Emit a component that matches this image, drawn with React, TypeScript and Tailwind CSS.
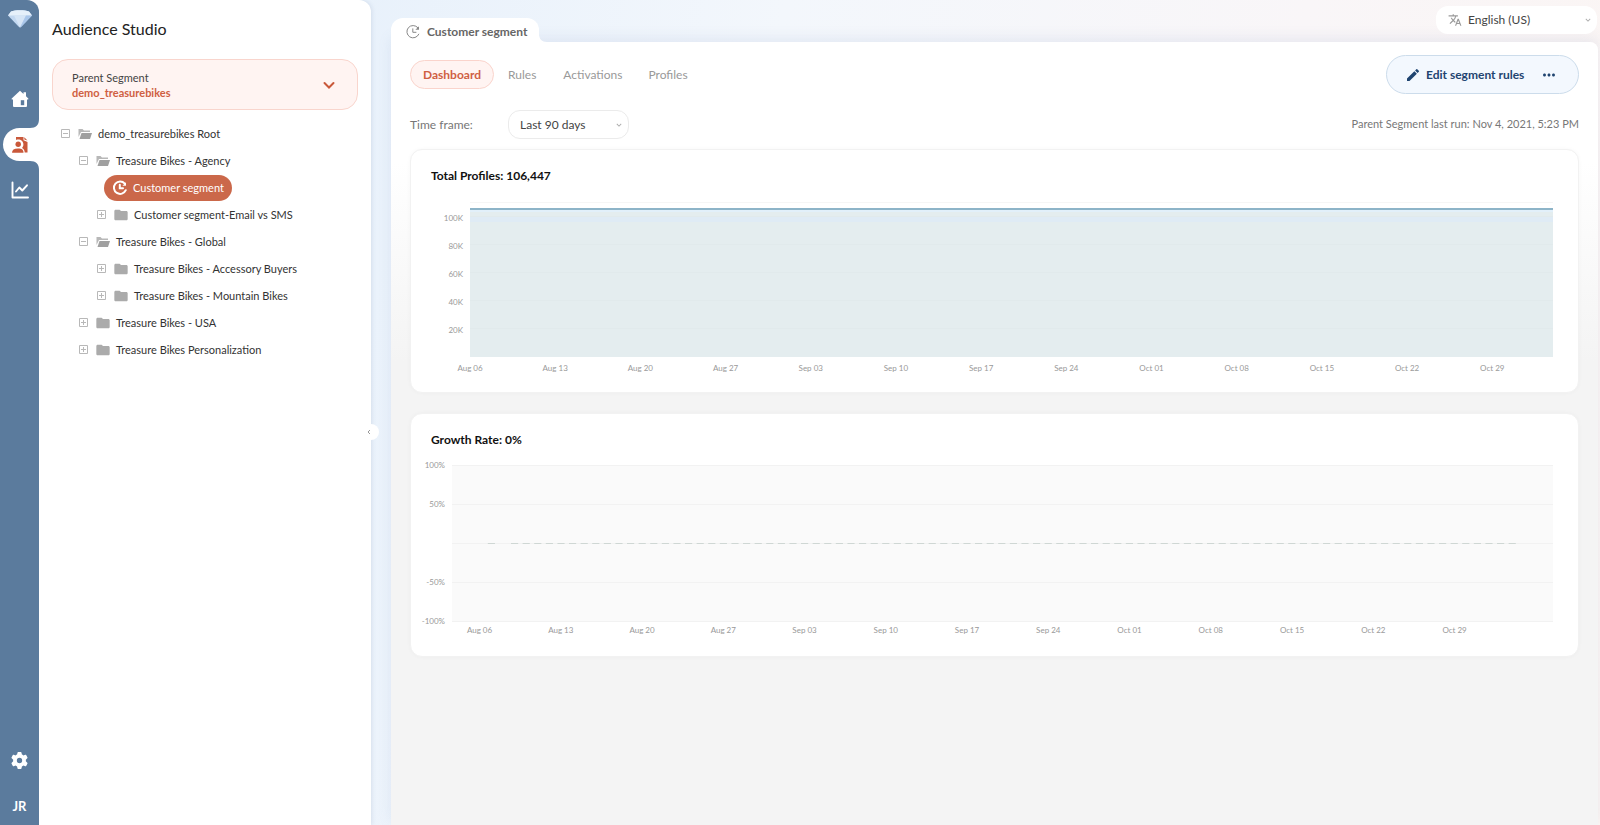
import type { ReactNode } from "react";
import { FaGear } from "react-icons/fa6";
import {
  MdEdit,
  MdFolder,
  MdKeyboardArrowDown,
  MdMoreHoriz,
  MdTranslate,
} from "react-icons/md";

type TreeRow = {
  label: string;
  level: number;
  open?: boolean;
  active?: boolean;
};

const tree: TreeRow[] = [
  { label: "demo_treasurebikes Root", level: 0, open: true },
  { label: "Treasure Bikes - Agency", level: 1, open: true },
  { label: "Customer segment", level: 2, active: true },
  { label: "Customer segment-Email vs SMS", level: 2 },
  { label: "Treasure Bikes - Global", level: 1, open: true },
  { label: "Treasure Bikes - Accessory Buyers", level: 2 },
  { label: "Treasure Bikes - Mountain Bikes", level: 2 },
  { label: "Treasure Bikes - USA", level: 1 },
  { label: "Treasure Bikes Personalization", level: 1 },
];

const indents = ["pl-[9px]", "pl-[27px]", "pl-[45px]"];

const weeks = [
  "Aug 06",
  "Aug 13",
  "Aug 20",
  "Aug 27",
  "Sep 03",
  "Sep 10",
  "Sep 17",
  "Sep 24",
  "Oct 01",
  "Oct 08",
  "Oct 15",
  "Oct 22",
  "Oct 29",
];

function Diamond() {
  return (
    <svg viewBox="0 0 24 18" className="w-6 h-[18px]" aria-hidden="true">
      <path
        d="M3 1.500C5 .6 8.500.3 12 .3s7 .3 9 1.200L24 5.500 13 17q-1 .8-2 0L0 5.500z"
        fill="#c3d8f1"
      />
      <path d="M3 1.500C5 .6 8.500.3 12 .3s7 .3 9 1.200L24 5.500H0z" fill="#e6f0fa" />
      <path d="M6 5.500h12l-6 12z" fill="#d6e5f6" />
      <path d="M18 5.500h6L13 17l-1 .4z" fill="#a9c6ea" />
    </svg>
  );
}

function HomeIcon() {
  return (
    <svg viewBox="0 0 18 18" className="w-[18px] h-[18px]" aria-hidden="true">
      <path
        d="M9 .8 12.500 4V2.200H15v4.100l2.300 2.200q.6 1-.5 1H16V16q0 1-1 1H3q-1 0-1-1V9.500h-.8q-1.100 0-.5-1z"
        fill="#fff"
      />
      <path d="M9.800 10.200h3.400v5H9.800z" fill="#5b7b9d" />
    </svg>
  );
}

function AudienceIcon() {
  return (
    <svg
      viewBox="0 0 18 18"
      className="w-[18px] h-[18px]"
      fill="#c9583a"
      aria-hidden="true"
    >
      <path d="M5 1h7.500v3.200L16.500 6v10.500h-2.800c-.1-2.300-.9-3.700-2.700-4.600.9-1 1.400-2 1.400-3.400C12.400 5.600 10 3.600 7.200 3.600c-.8 0-1.500.1-2.200.4z" />
      <path d="M13.300 1.200 16.500 4.600l-3.200-1z" />
      <circle cx="7.200" cy="8.300" r="2.700" />
      <path d="M1 16.800c0-3 2-4.400 6-4.400s5.500 1.400 5.500 4.400z" />
    </svg>
  );
}

function ChartIcon() {
  return (
    <svg
      viewBox="0 0 18 18"
      className="w-[18px] h-[18px]"
      fill="none"
      stroke="#fff"
      strokeWidth="1.900"
      strokeLinejoin="round"
      strokeLinecap="round"
      aria-hidden="true"
    >
      <path d="M1.500 1.500v15H17" />
      <path d="M5 10.500 8.300 6.500l3 3L16 4.300" />
    </svg>
  );
}

function SegmentIcon({ className }: { className?: string }) {
  return (
    <svg
      viewBox="0 0 16 16"
      className={className}
      fill="none"
      stroke="currentColor"
      strokeLinecap="round"
      aria-hidden="true"
    >
      <path d="M12.800 3.600A6.200 6.200 0 1 0 13.800 10.200" />
      <path d="M7.800 4.800V8.300H11" />
      <path d="M14 2.200v3.600h-3.600z" fill="currentColor" stroke="none" />
    </svg>
  );
}

function OpenFolder() {
  return (
    <svg viewBox="0 0 14 12" className="w-[14px] h-3" aria-hidden="true">
      <path d="M0.500 9V1h4l1.500 1.500h6V4H3z" fill="#b8b8b8" />
      <path d="M3.500 5H14l-2 6H1.500z" fill="#a0a0a0" />
    </svg>
  );
}

function Toggle({ open }: { open?: boolean }) {
  return (
    <svg
      viewBox="0 0 9 9"
      className="w-[9px] h-[9px]"
      fill="none"
      stroke="#b8b8b8"
      aria-hidden="true"
    >
      <path d="M.5.5h8v8h-8zM2 4.500h5" />
      {!open && <path d="M4.500 2v5" />}
    </svg>
  );
}

function Rail() {
  return (
    <nav className="w-[39px] shrink-0 flex flex-col items-center bg-[#5b7b9d] rounded-tr-xl pt-[10px]">
      <a href="#home" aria-label="Treasure Data">
        <Diamond />
      </a>
      <a href="#start" aria-label="Home" className="mt-[62px]">
        <HomeIcon />
      </a>
      <a
        href="#audience"
        aria-label="Audience Studio"
        className="relative mt-5 w-9 h-[33px] self-end bg-white rounded-l-full flex items-center pl-2"
      >
        <svg
          viewBox="0 0 9 9"
          className="absolute right-0 -top-[9px] w-[9px] h-[9px]"
          aria-hidden="true"
        >
          <path d="M9 0v9H0c6 0 9-3 9-9z" fill="#fff" />
        </svg>
        <AudienceIcon />
        <svg
          viewBox="0 0 9 9"
          className="absolute right-0 -bottom-[9px] w-[9px] h-[9px]"
          aria-hidden="true"
        >
          <path d="M9 9V0H0c6 0 9 3 9 9z" fill="#fff" />
        </svg>
      </a>
      <a href="#insights" aria-label="Insights" className="mt-5">
        <ChartIcon />
      </a>
      <a href="#settings" aria-label="Settings" className="mt-auto text-white">
        <FaGear className="w-[17px] h-[17px]" />
      </a>
      <button className="mt-7 mb-[10px] text-[13px] leading-[18px] font-bold text-white">
        JR
      </button>
    </nav>
  );
}

function TreeItem({ row }: { row: TreeRow }) {
  if (row.active) {
    return (
      <li className="h-[27px] pl-[52px] flex items-center">
        <button className="h-[26px] rounded-full bg-[#cb684a] text-white flex items-center gap-[5px] pl-2 pr-2">
          <SegmentIcon className="w-4 h-4 stroke-2" />
          {row.label}
        </button>
      </li>
    );
  }

  return (
    <li className={`h-[27px] flex items-center ${indents[row.level]}`}>
      <button className="flex items-center">
        <Toggle open={row.open} />
        <span className="w-[14px] ml-2 mr-[6px]">
          {row.open ? (
            <OpenFolder />
          ) : (
            <MdFolder className="w-4 h-4 -mx-px text-[#ababab]" />
          )}
        </span>
        {row.label}
      </button>
    </li>
  );
}

function Sidebar() {
  return (
    <aside className="relative w-[371px] shrink-0 flex bg-white rounded-tr-xl shadow-[1px_0_4px_rgba(90,110,150,0.15)]">
      <Rail />
      <div className="flex-1 pl-[13px] pr-[13px] pt-[18px]">
        <h1 className="text-[16px] leading-[22px] text-[#222]">
          Audience Studio
        </h1>
        <button className="mt-[19px] w-full h-[51px] rounded-2xl border border-[#f9d5cd] bg-[#fff4f2] flex items-center justify-between pl-[19px] pr-[18px] text-left">
          <span className="text-[11px] leading-[15px]">
            <span className="block text-[#444]">Parent Segment</span>
            <span className="block font-bold text-[#cf5f42]">
              demo_treasurebikes
            </span>
          </span>
          <svg viewBox="0 0 20 20" className="w-5 h-5" aria-hidden="true">
            <path
              d="m5.500 8 4.500 4.500L14.500 8"
              fill="none"
              stroke="#c9583a"
              strokeWidth="2"
              strokeLinecap="round"
            />
          </svg>
        </button>
        <ul className="mt-[10px] text-[11px] leading-[15px] text-[#333]">
          {tree.map((row) => (
            <TreeItem key={row.label} row={row} />
          ))}
        </ul>
      </div>
      <button
        aria-label="Collapse sidebar"
        className="absolute -right-2 top-[424px] w-4 h-4 rounded-full bg-white flex items-center justify-center"
      >
        <svg viewBox="0 0 6 6" className="w-1.5 h-1.5 mr-1" aria-hidden="true">
          <path d="M4 1 2 3l2 2" fill="none" stroke="#999" />
        </svg>
      </button>
    </aside>
  );
}

function Card({ title, children }: { title: string; children: ReactNode }) {
  return (
    <section className="h-[244px] bg-white rounded-xl border border-[#f2f2f2] shadow-[0_0_4px_rgba(0,0,0,0.03)] pl-5 pr-[25px] pt-[18px]">
      <h2 className="text-[12px] leading-4 font-bold text-[#111]">{title}</h2>
      {children}
    </section>
  );
}

function ProfilesChart() {
  return (
    <div className="mt-4 pl-[39px]">
      <svg
        width="100%"
        height="176"
        className="block overflow-visible text-[8px]"
        fill="#999"
        role="img"
        aria-label="Total profiles by day"
      >
        <rect x="0" y="2" width="100%" height="1" fill="#f6f6f6" />
        <rect x="0" y="10" width="100%" height="147" fill="#e4edef" />
        <rect x="0" y="10" width="100%" height="2" fill="#e2f0fa" />
        <rect x="0" y="17" width="100%" height="5" fill="#dfebf5" />
        <rect x="0" y="8" width="100%" height="2" fill="#8db4c8" />
        {["100K", "80K", "60K", "40K", "20K"].map((t, i) => (
          <g key={t}>
            <rect x="0" y={16 + i * 28} width="100%" height="1" fill="#e1eaec" />
            <text x="-7" y={21 + i * 28} textAnchor="end">
              {t}
            </text>
          </g>
        ))}
        {weeks.map((w, i) => (
          <text key={w} x={`${i * 7.866}%`} y="171" textAnchor="middle">
            {w}
          </text>
        ))}
      </svg>
    </div>
  );
}

function GrowthChart() {
  // one dash per day, Aug 08 has no data
  const days = Array.from({ length: 89 }, (_, i) => i + 1).filter(
    (d) => d !== 2,
  );

  return (
    <div className="mt-[17px] pl-[21px]">
      <svg
        width="100%"
        height="170"
        className="block overflow-visible text-[8px]"
        fill="#999"
        role="img"
        aria-label="Growth rate by day"
      >
        <rect width="100%" height="156" fill="#fafafa" />
        {["100%", "50%", "", "-50%", "-100%"].map((t, i) => (
          <g key={i}>
            <rect x="0" y={i * 39} width="100%" height="1" fill="#f2f2f2" />
            <text x="-7" y={i * 39 + 3} textAnchor="end">
              {t}
            </text>
          </g>
        ))}
        {days.map((d) => (
          <line
            key={d}
            x1={`${2.2 + d * 1.0536}%`}
            x2={`${2.85 + d * 1.0536}%`}
            y1="78.500"
            y2="78.500"
            stroke="#cfd7d4"
          />
        ))}
        {weeks.map((w, i) => (
          <text key={w} x={`${2.5 + i * 7.38}%`} y="168" textAnchor="middle">
            {w}
          </text>
        ))}
      </svg>
    </div>
  );
}

export default function App() {
  return (
    <div className="min-h-screen flex font-['Lato',sans-serif] bg-[linear-gradient(100deg,#e8f1fb_20%,#f3f7fc_45%,#f9f6f8_75%,#fbf5f3_100%)]">
      <Sidebar />

      <main className="flex-1 flex flex-col pl-5 pr-[2px]">
        <div className="h-[42px] flex justify-between items-end">
          <div className="relative h-6 w-[148px] bg-white rounded-t-xl flex items-center gap-1.5 pl-[14px] pt-1 text-[12px] leading-4 font-bold text-[#666]">
            <SegmentIcon className="w-4 h-4 text-[#888]" />
            Customer segment
            <svg
              viewBox="0 0 8 8"
              className="absolute -right-2 bottom-0 w-2 h-2"
              aria-hidden="true"
            >
              <path d="M0 0v8h8C3 8 0 5 0 0z" fill="#fff" />
            </svg>
          </div>
          <div className="relative mb-2 mr-px flex items-center">
            <MdTranslate className="absolute left-3 w-[14px] h-[14px] text-[#999]" />
            <select
              aria-label="Language"
              className="appearance-none w-[161px] h-7 rounded-xl bg-white pl-8 text-[12px] text-[#444]"
            >
              <option>English (US)</option>
            </select>
            <MdKeyboardArrowDown className="absolute right-1 w-[10px] h-[10px] text-[#aaa]" />
          </div>
        </div>

        <div className="flex-1 rounded-tr-lg bg-[linear-gradient(180deg,#fff_120px,#f4f4f4_320px)] shadow-[0_-4px_14px_rgba(110,130,180,0.12)] pl-[19px] pr-[19px] pt-[13px]">
          <div className="flex justify-between items-center">
            <div className="flex items-center text-[12px] leading-4 text-[#999]">
              <button className="h-[29px] w-[84px] rounded-full border border-[#fad4cc] bg-[#fff4f2] text-[#cf5f42] font-bold">
                Dashboard
              </button>
              <button className="ml-[14px]">Rules</button>
              <button className="ml-[27px]">Activations</button>
              <button className="ml-[26px]">Profiles</button>
            </div>
            <div className="h-[39px] w-[193px] rounded-full border border-[#ccdceb] bg-[#f3f8fe] flex items-center justify-between pl-[18px] pr-5 text-[#1f4470]">
              <button className="flex items-center gap-[5px] text-[12px] leading-4 font-bold">
                <MdEdit className="w-4 h-4" />
                Edit segment rules
              </button>
              <button aria-label="More actions">
                <MdMoreHoriz className="w-[18px] h-[18px]" />
              </button>
            </div>
          </div>

          <div className="mt-4 flex justify-between items-center">
            <div className="flex items-center text-[12px]">
              <label htmlFor="frame" className="w-[98px] text-[#777]">
                Time frame:
              </label>
              <span className="relative flex items-center">
                <select
                  id="frame"
                  className="appearance-none w-[121px] h-[29px] rounded-xl border border-[#ebebeb] bg-white pl-[11px] text-[#444]"
                >
                  <option>Last 90 days</option>
                </select>
                <MdKeyboardArrowDown className="absolute right-[5px] w-[10px] h-[10px] text-[#aaa]" />
              </span>
            </div>
            <p className="text-[11px] text-[#777]">
              Parent Segment last run: Nov 4, 2021, 5:23 PM
            </p>
          </div>

          <div className="mt-[10px] flex flex-col gap-5">
            <Card title="Total Profiles: 106,447">
              <ProfilesChart />
            </Card>
            <Card title="Growth Rate: 0%">
              <GrowthChart />
            </Card>
          </div>
        </div>
      </main>
    </div>
  );
}
